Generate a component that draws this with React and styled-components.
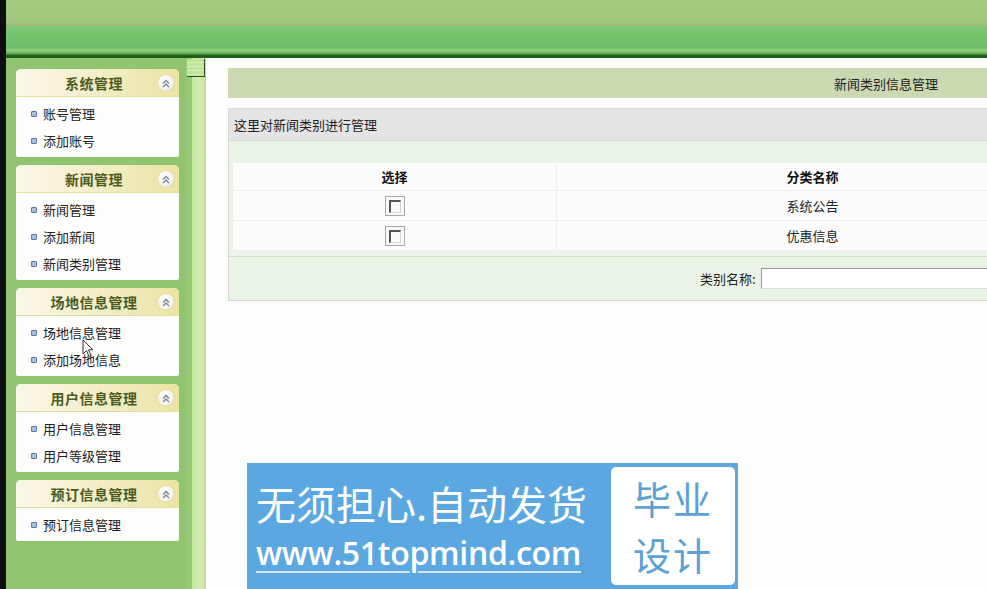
import React from "react";
import styled, { createGlobalStyle } from "styled-components";

const GlobalStyle = createGlobalStyle`
  html, body {
    margin: 0;
    padding: 0;
    background: #fdfdfd;
    font-family: "Noto Sans CJK SC", "Liberation Sans", sans-serif;
    font-size: 13px;
    color: #222;
  }
`;

const Page = styled.div`
  position: relative;
  width: 987px;
  height: 589px;
  overflow: hidden;
  border-left: 6px solid #0e0e0e;
  box-sizing: border-box;
  display: flex;
  flex-direction: column;
`;

const Header = styled.div`
  height: 55px;
  flex-shrink: 0;
  border-bottom: 3px solid #1d5e1b;
  background: linear-gradient(
    to bottom,
    #a4cc81 0,
    #a0c67c 23px,
    #a8b880 24px,
    #a8b880 25px,
    #7dc973 26px,
    #6fbd66 48px,
    #8dcf7b 50px,
    #6cb862 53px,
    #2f7b2b 55px
  );
`;

const Body = styled.div`
  flex: 1;
  display: flex;
  min-height: 0;
`;

const Sidebar = styled.div`
  width: 180px;
  flex-shrink: 0;
  background: #90c46e;
  padding: 11px 7px 0 10px;
  box-sizing: border-box;
  display: flex;
  flex-direction: column;
  gap: 8px;
`;

const Panel = styled.div`
  border-radius: 5px 5px 2px 2px;
  overflow: hidden;
  background: #fdfdfb;
`;

const PanelHead = styled.div`
  height: 28px;
  display: flex;
  align-items: center;
  position: relative;
  padding-right: 7px;
  background: linear-gradient(to right, #fbf8ea 0%, #f3eecb 45%, #ebe4a3 100%);
  border-bottom: 1px solid #e3dca0;
  box-sizing: border-box;
`;

const PanelTitle = styled.span`
  flex: 1;
  text-align: center;
  font-size: 14px;
  font-weight: bold;
  color: #4d5b20;
  letter-spacing: 0.5px;
`;

const Toggle = styled.span`
  position: absolute;
  right: 5px;
  top: 6px;
  width: 16px;
  height: 16px;
  border-radius: 50%;
  background: radial-gradient(circle at 40% 35%, #ffffff 0, #f4f4f0 55%, #d9d6c0 100%);
  box-shadow: 0 0 1px #b8b390;
  display: flex;
  align-items: center;
  justify-content: center;
`;

const PanelBody = styled.ul`
  list-style: none;
  margin: 0;
  padding: 3px 0 3px 15px;
`;

const Item = styled.li`
  height: 27px;
  display: flex;
  align-items: center;
  gap: 6px;
  font-size: 13px;
  color: #222;
`;

const Bullet = styled.span`
  width: 4px;
  height: 4px;
  border: 1px solid #5d77a8;
  background: #a9bddc;
  border-radius: 1px;
`;

const Splitter = styled.div`
  width: 20px;
  flex-shrink: 0;
  display: flex;
  flex-direction: column;
  background: linear-gradient(
    to right,
    #97ca77 0,
    #97ca77 6px,
    #c9e6a1 6px,
    #d3ebad 14px,
    #c5e39b 19px,
    #b6da8c 20px
  );
`;

const SplitHandle = styled.div`
  margin: 1px 0 0 1px;
  width: 17px;
  height: 17px;
  border-right: 1px solid #2e4a2b;
  border-bottom: 1px solid #2e4a2b;
  background: repeating-linear-gradient(
    to bottom,
    #c0e39a 0,
    #c0e39a 3px,
    #d5eeb5 3px,
    #d5eeb5 4px
  );
`;

const Main = styled.div`
  flex: 1;
  overflow: hidden;
  background: #fdfdfd;
  padding: 10px 0 0 22px;
  display: flex;
  flex-direction: column;
  gap: 10px;
`;

const TitleBar = styled.div`
  width: 1316px;
  flex-shrink: 0;
  height: 30px;
  background: #cad9b0;
  display: flex;
  align-items: center;
  justify-content: center;
  font-size: 13px;
  color: #222;
`;

const Box = styled.div`
  width: 843px;
  flex-shrink: 0;
  border: 1px solid #d6dccb;
  background: #eaf4e6;
`;

const BoxHead = styled.div`
  height: 31px;
  background: #e4e4e4;
  border-bottom: 1px solid #d9dcd2;
  display: flex;
  align-items: center;
  padding-left: 5px;
  font-size: 13px;
`;

const Strip = styled.div`
  height: 22px;
`;

const Table = styled.table`
  margin: 0 3px;
  width: calc(100% - 6px);
  border-collapse: collapse;
  background: #fcfcfc;
`;

const Th = styled.th`
  height: 27px;
  padding: 0;
  font-size: 13px;
  font-weight: bold;
  color: #111;
  border: 1px solid #eeeeee;
  border-top: none;
  width: ${(p) => p.w || "auto"};
`;

const Td = styled.td`
  height: 29px;
  text-align: center;
  font-size: 13px;
  color: #222;
  border: 1px solid #eeeeee;
  padding: 0;
`;

const CheckBox = styled.span`
  display: inline-flex;
  align-items: center;
  justify-content: center;
  width: 20px;
  height: 20px;
  box-sizing: border-box;
  border: 1px solid #a8a8a8;
  background: #fafafa;
  vertical-align: middle;

  &::after {
    content: "";
    width: 9px;
    height: 10px;
    border-left: 2px solid #555;
    border-top: 2px solid #555;
    border-right: 1px solid #d4d4d4;
    border-bottom: 1px solid #d4d4d4;
  }
`;

const Footer = styled.div`
  height: 43px;
  margin-top: 5px;
  border-top: 1px solid #cfdcc4;
  display: flex;
  align-items: center;
  padding-left: 471px;
  gap: 5px;
  font-size: 13px;
  color: #222;
`;

const Input = styled.input`
  width: 300px;
  height: 21px;
  box-sizing: border-box;
  border: 1px solid #9a9a9a;
  border-right-color: #dcdcdc;
  border-bottom-color: #dcdcdc;
  background: #fff;
`;

const Ad = styled.div`
  position: absolute;
  left: 241px;
  top: 463px;
  width: 491px;
  height: 126px;
  background: #5ba7e2;
  display: flex;
  align-items: center;
  padding: 0 3px 0 9px;
  box-sizing: border-box;
  gap: 8px;
`;

const AdLeft = styled.div`
  display: flex;
  flex-direction: column;
  color: #fff;
  flex: 1;
  padding-top: 4px;
`;

const AdSlogan = styled.div`
  font-size: 40px;
  letter-spacing: 0;
  line-height: 50px;
  white-space: nowrap;
`;

const AdUrl = styled.div`
  font-family: "Open Sans", "Liberation Sans", sans-serif;
  font-size: 32px;
  font-weight: 600;
  line-height: 50px;
  letter-spacing: -0.3px;
  white-space: nowrap;
  text-decoration: underline;
  text-decoration-thickness: 2px;
  text-underline-offset: 6px;
  text-decoration-color: #d4e6f5;
`;

const AdBadge = styled.div`
  width: 124px;
  height: 118px;
  flex-shrink: 0;
  background: #fff;
  border-radius: 5px;
  display: flex;
  flex-direction: column;
  align-items: center;
  justify-content: center;
  color: #5ca0d6;
  font-size: 38px;
  line-height: 56px;
  letter-spacing: 2px;
`;

const Cursor = styled.svg`
  position: absolute;
  left: 76px;
  top: 339px;
`;

const menus = [
  { title: "系统管理", items: ["账号管理", "添加账号"] },
  { title: "新闻管理", items: ["新闻管理", "添加新闻", "新闻类别管理"] },
  { title: "场地信息管理", items: ["场地信息管理", "添加场地信息"] },
  { title: "用户信息管理", items: ["用户信息管理", "用户等级管理"] },
  { title: "预订信息管理", items: ["预订信息管理"] },
];

const categories = ["系统公告", "优惠信息"];

function UpIcon() {
  return (
    <svg width="8" height="9" viewBox="0 0 8 9">
      <path d="M1 4.5 L4 1.5 L7 4.5" fill="none" stroke="#7a7f9a" strokeWidth="1.3" />
      <path d="M1 8 L4 5 L7 8" fill="none" stroke="#7a7f9a" strokeWidth="1.3" />
    </svg>
  );
}

export default function App() {
  return (
    <>
      <GlobalStyle />
      <Page>
        <Header />
        <Body>
          <Sidebar>
            {menus.map((m) => (
              <Panel key={m.title}>
                <PanelHead>
                  <PanelTitle>{m.title}</PanelTitle>
                  <Toggle>
                    <UpIcon />
                  </Toggle>
                </PanelHead>
                <PanelBody>
                  {m.items.map((it) => (
                    <Item key={it}>
                      <Bullet />
                      {it}
                    </Item>
                  ))}
                </PanelBody>
              </Panel>
            ))}
          </Sidebar>
          <Splitter>
            <SplitHandle />
          </Splitter>
          <Main>
            <TitleBar>新闻类别信息管理</TitleBar>
            <Box>
              <BoxHead>这里对新闻类别进行管理</BoxHead>
              <Strip />
              <Table>
                <thead>
                  <tr>
                    <Th w="323px">选择</Th>
                    <Th>分类名称</Th>
                  </tr>
                </thead>
                <tbody>
                  {categories.map((c) => (
                    <tr key={c}>
                      <Td>
                        <CheckBox />
                      </Td>
                      <Td>{c}</Td>
                    </tr>
                  ))}
                </tbody>
              </Table>
              <Footer>
                类别名称:
                <Input type="text" />
              </Footer>
            </Box>
          </Main>
        </Body>
        <Cursor width="12" height="19" viewBox="0 0 12 19">
          <path d="M1 1 L1 15 L4.5 11.5 L7 17.5 L9 16.5 L6.5 10.8 L11 10.8 Z" fill="#fff" stroke="#333" strokeWidth="1" />
        </Cursor>
        <Ad>
          <AdLeft>
            <AdSlogan>无须担心.自动发货</AdSlogan>
            <AdUrl>www.51topmind.com</AdUrl>
          </AdLeft>
          <AdBadge>
            <span>毕业</span>
            <span>设计</span>
          </AdBadge>
        </Ad>
      </Page>
    </>
  );
}
